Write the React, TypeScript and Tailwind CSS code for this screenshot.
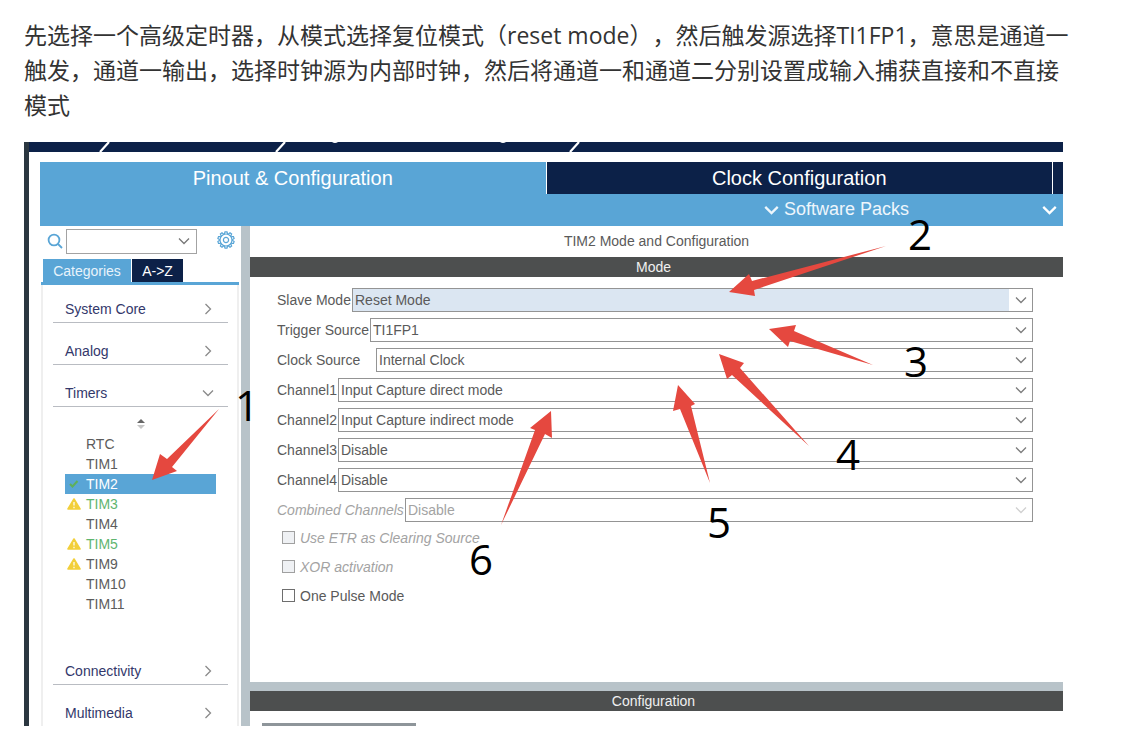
import type { ReactNode } from "react";

type Field = {
  id: string;
  label: string;
  value: string;
  labelWidth: string;
  active?: boolean;
  disabled?: boolean;
};

const fields: Field[] = [
  { id: "slave", label: "Slave Mode", value: "Reset Mode", labelWidth: "w-[75px]", active: true },
  { id: "trigger", label: "Trigger Source", value: "TI1FP1", labelWidth: "w-[93px]" },
  { id: "clock", label: "Clock Source", value: "Internal Clock", labelWidth: "w-[99px]" },
  { id: "ch1", label: "Channel1", value: "Input Capture direct mode", labelWidth: "w-[61px]" },
  { id: "ch2", label: "Channel2", value: "Input Capture indirect mode", labelWidth: "w-[61px]" },
  { id: "ch3", label: "Channel3", value: "Disable", labelWidth: "w-[61px]" },
  { id: "ch4", label: "Channel4", value: "Disable", labelWidth: "w-[61px]" },
  { id: "combined", label: "Combined Channels", value: "Disable", labelWidth: "w-[128px]", disabled: true },
];

const checks = [
  { id: "etr", label: "Use ETR as Clearing Source", disabled: true },
  { id: "xor", label: "XOR activation", disabled: true },
  { id: "pulse", label: "One Pulse Mode", disabled: false },
];

type Timer = { name: string; icon?: "check" | "warn"; tone: string };

const timers: Timer[] = [
  { name: "RTC", tone: "text-[#5c5c5c]" },
  { name: "TIM1", tone: "text-[#5c5c5c]" },
  { name: "TIM2", icon: "check", tone: "bg-[#59a5d6] text-white" },
  { name: "TIM3", icon: "warn", tone: "text-[#5fb56f]" },
  { name: "TIM4", tone: "text-[#5c5c5c]" },
  { name: "TIM5", icon: "warn", tone: "text-[#5fb56f]" },
  { name: "TIM9", icon: "warn", tone: "text-[#5c5c5c]" },
  { name: "TIM10", tone: "text-[#5c5c5c]" },
  { name: "TIM11", tone: "text-[#5c5c5c]" },
];

const arrows = [
  "152,480 160,454 167,459 219,409 172,467 177,471",
  "729,292 749,274 752,281 886,246 754,290 755,296",
  "769,329 796,325 794,331 873,365 790,341 788,347",
  "719,354 744,363 740,368 809,446 732,375 727,379",
  "678,385 695,404 691,406 710,483 680,409 673,411",
  "551,411 552,438 545,434 501,525 535,430 530,428",
];

const marks = [
  { n: "1", x: 235, y: 421 },
  { n: "2", x: 908, y: 250 },
  { n: "3", x: 904, y: 377 },
  { n: "4", x: 836, y: 470 },
  { n: "5", x: 707, y: 538 },
  { n: "6", x: 469, y: 575 },
];

function Chevron({ className, width = 1.3 }: { className: string; width?: number }) {
  return (
    <svg viewBox="0 0 12 8" className={className} fill="none" stroke="currentColor" strokeWidth={width} aria-hidden="true">
      <path d="M1 1.5 L6 6.5 L11 1.5" />
    </svg>
  );
}

function ChevronRight() {
  return (
    <svg viewBox="0 0 8 12" className="h-3 w-2 text-[#8a8a8a]" fill="none" stroke="currentColor" strokeWidth={1.3} aria-hidden="true">
      <path d="M1.5 1 L6.5 6 L1.5 11" />
    </svg>
  );
}

function SearchIcon() {
  return (
    <svg viewBox="0 0 16 16" className="h-4 w-4 shrink-0 text-[#59a5d6]" fill="none" stroke="currentColor" strokeWidth={1.8} aria-hidden="true">
      <circle cx="7" cy="7" r="5.4" />
      <path d="M11 11 L15 15" />
    </svg>
  );
}

function GearIcon() {
  const teeth = [0, 36, 72, 108, 144, 180, 216, 252, 288, 324];
  return (
    <svg viewBox="-9 -9 18 18" className="h-[18px] w-[18px] text-[#59a5d6]" fill="none" stroke="currentColor" strokeWidth={1.2} aria-hidden="true">
      <circle r="6" />
      <circle r="2.6" />
      {teeth.map((a) => (
        <path key={a} d="M-1.6 -6 L-1 -8.2 H1 L1.6 -6" transform={`rotate(${a})`} />
      ))}
    </svg>
  );
}

function WarnIcon() {
  return (
    <svg viewBox="0 0 14 12" className="h-3 w-[14px]" aria-hidden="true">
      <path d="M7 1 L13 11 H1 Z" fill="#f2cf3a" stroke="#f2cf3a" strokeWidth={1.6} strokeLinejoin="round" />
      <path d="M7 4 V7.6 M7 8.8 V10.2" stroke="#fff" strokeWidth={1.2} />
    </svg>
  );
}

function CheckIcon() {
  return (
    <svg viewBox="0 0 14 12" className="h-3 w-[14px]" fill="none" stroke="#5fb05a" strokeWidth={2} aria-hidden="true">
      <path d="M3 6 L5.5 8.5 L10.5 3" />
    </svg>
  );
}

function Category({ label, open, last }: { label: string; open?: boolean; last?: boolean }) {
  return (
    <button
      type="button"
      className={
        last
          ? "flex h-[27px] w-full items-center justify-between pr-4 pl-3 text-[#33386b]"
          : "flex h-7 w-full items-center justify-between border-b border-[#b9bcc2] pr-4 pl-3 text-[#33386b]"
      }
    >
      <span>{label}</span>
      {open ? <Chevron className="-mr-0.5 h-2 w-3 text-[#8a8a8a]" /> : <ChevronRight />}
    </button>
  );
}

function BarTitle({ children }: { children: ReactNode }) {
  return <h3 className="h-5 bg-[#4d4f4f] pr-1.5 text-center text-sm leading-5 text-[#f0f0f0]">{children}</h3>;
}

function TopStrip() {
  return (
    <svg viewBox="0 0 1034 10" preserveAspectRatio="xMinYMin slice" className="block h-[10px] w-full bg-[#0c2148]" aria-hidden="true">
      <g stroke="#fff" strokeWidth={2.2}>
        <path d="M71 10 L80 0 M247 10 L256 0 M541 10 L550 0" />
      </g>
      <path d="M303 0 H309 Q306 2 303 0 Z M471 0 H477 Q474 2 471 0 Z" fill="#fff" />
    </svg>
  );
}

function Sidebar() {
  return (
    <aside className="w-[201px] shrink-0">
      <div className="flex h-[33px] items-start pt-[3px] pl-[7px]">
        <label htmlFor="find" className="pt-1" aria-label="Search">
          <SearchIcon />
        </label>
        <div className="relative ml-[3px]">
          <input id="find" type="text" className="h-[25px] w-[131px] border border-[#a3a3a3] bg-white px-1 outline-none" />
          <Chevron className="pointer-events-none absolute top-2 right-[7px] h-2 w-3 text-[#777]" />
        </div>
        <button type="button" className="ml-5 pt-0.5" aria-label="Settings">
          <GearIcon />
        </button>
      </div>
      <div className="mr-[2px] ml-px flex border-b-[3px] border-[#59a5d6] pl-[2px]">
        <button type="button" className="h-[23px] w-[88px] bg-[#59a5d6] text-[#e8f3fb]">Categories</button>
        <button type="button" className="ml-px h-[23px] w-[51px] bg-[#0c2148] text-white">A-&gt;Z</button>
      </div>
      <div className="mr-[2px] ml-px border-x-2 border-[#efefef] pt-[10px] pr-[9px] pl-[10px]">
        <div className="flex flex-col gap-[14px]">
          <Category label="System Core" />
          <Category label="Analog" />
          <Category label="Timers" open />
        </div>
        <div className="flex h-[27px] items-end justify-center pb-1">
          <svg viewBox="0 0 8 12" className="h-3 w-2" aria-hidden="true">
            <path d="M0 5 L4 1 L8 5 Z" fill="#666" />
            <path d="M0 7 L4 11 L8 7 Z" fill="#c6c6c6" />
          </svg>
        </div>
        <ul className="mb-[43px] ml-3 mr-3">
          {timers.map((t) => (
            <li key={t.name} className={t.tone}>
              <button type="button" className="flex h-5 w-full items-center text-left">
                <span className="flex w-[21px] pl-[2px]">
                  {t.icon === "warn" && <WarnIcon />}
                  {t.icon === "check" && <CheckIcon />}
                </span>
                {t.name}
              </button>
            </li>
          ))}
        </ul>
        <div className="flex flex-col gap-[14px]">
          <Category label="Connectivity" />
          <Category label="Multimedia" last />
        </div>
      </div>
    </aside>
  );
}

function FieldRow({ field }: { field: Field }) {
  return (
    <div className={field.disabled ? "flex h-6 items-center text-[#a3a3a3]" : "flex h-6 items-center text-[#5a5a5a]"}>
      <label htmlFor={field.id} className={`${field.labelWidth} shrink-0 whitespace-nowrap ${field.disabled ? "italic" : ""}`}>
        {field.label}
      </label>
      <div className="relative h-6 flex-1 border border-[#949494] bg-white">
        <select
          id={field.id}
          disabled={field.disabled}
          className={`block h-full w-full appearance-none pl-[2px] opacity-100 outline-none ${field.active ? "bg-[#dbe6f2]" : "bg-white"}`}
        >
          <option>{field.value}</option>
        </select>
        <span className="pointer-events-none absolute inset-y-0 right-0 flex w-[23px] items-center justify-center bg-white">
          <Chevron className={field.disabled ? "h-2 w-3 text-[#d0d0d0]" : "h-2 w-3 text-[#7d7d7d]"} />
        </span>
      </div>
    </div>
  );
}

function ModePanel() {
  return (
    <section className="flex min-w-0 flex-1 flex-col">
      <h2 className="h-[31px] text-center text-sm leading-[31px] text-[#5a5a5a]">TIM2 Mode and Configuration</h2>
      <BarTitle>Mode</BarTitle>
      <form className="flex-1 pt-[11px] pr-[30px] pl-[27px]">
        <div className="flex flex-col gap-[6px]">
          {fields.map((f) => (
            <FieldRow key={f.id} field={f} />
          ))}
        </div>
        <div className="mt-px flex flex-col pl-[5px]">
          {checks.map((c) => (
            <label
              key={c.id}
              htmlFor={c.id}
              className={c.disabled ? "flex h-[29px] items-center gap-[5px] text-[#a3a3a3] italic" : "flex h-[29px] items-center gap-[5px] text-[#5a5a5a]"}
            >
              <input
                id={c.id}
                type="checkbox"
                disabled={c.disabled}
                className={
                  c.disabled
                    ? "h-[13px] w-[13px] appearance-none border border-[#a0a0a0] bg-[#eff1f4]"
                    : "h-[13px] w-[13px] appearance-none border border-[#6e6e6e] bg-white checked:bg-[#59a5d6]"
                }
              />
              {c.label}
            </label>
          ))}
        </div>
      </form>
      <div className="h-[9px] bg-[#b8c3c9]" />
      <BarTitle>Configuration</BarTitle>
      <div className="pt-3 pl-3">
        <div className="h-[3px] w-[154px] bg-[#8e959a]" />
      </div>
    </section>
  );
}

function Annotations() {
  return (
    <svg
      viewBox="29 142 1034 584"
      preserveAspectRatio="xMinYMin meet"
      className="pointer-events-none absolute inset-0 h-full w-full"
    >
      <g fill="#e5483f">
        {arrows.map((points) => (
          <polygon key={points} points={points} />
        ))}
      </g>
      <g className="fill-black font-['Open_Sans','Noto_Sans',sans-serif] text-[42px]">
        {marks.map((m) => (
          <text key={m.n} x={m.x} y={m.y}>
            {m.n}
          </text>
        ))}
      </g>
    </svg>
  );
}

export default function App() {
  return (
    <main className="min-h-screen bg-white pt-[18px] pr-[60px] pb-[15px] pl-6">
      <p className="font-['Open_Sans','Noto_Sans_CJK_SC',sans-serif] text-[23px] leading-[35px] whitespace-nowrap text-[#333] [text-spacing-trim:space-all]">
        先选择一个高级定时器，从模式选择复位模式（reset mode），然后触发源选择TI1FP1，意思是通道一
        <br />
        触发，通道一输出，选择时钟源为内部时钟，然后将通道一和通道二分别设置成输入捕获直接和不直接
        <br />
        模式
      </p>
      <figure className="relative mt-[19px] overflow-hidden border-l-[5px] border-[#2b3740] font-['Liberation_Sans',Arial,sans-serif] text-sm">
        <TopStrip />
        <div className="pt-[10px] pl-[11px]">
          <header className="bg-[#59a5d6] text-white">
            <nav className="flex h-8 text-[20px]">
              <button type="button" className="min-w-0 flex-1">Pinout &amp; Configuration</button>
              <button type="button" className="min-w-0 flex-1 border-x border-white bg-[#0c2148]">Clock Configuration</button>
              <span className="w-[10px] bg-[#0c2148]" />
            </nav>
            <div className="flex h-8 items-center justify-end pr-[6px] text-[18px]">
              <button type="button" className="flex items-center gap-[5px] text-[#eef6fc]">
                <Chevron className="h-[10px] w-[15px]" width={1.8} />
                Software Packs
              </button>
              <button type="button" className="ml-[133px]" aria-label="More">
                <Chevron className="h-[10px] w-[15px]" width={1.8} />
              </button>
            </div>
          </header>
          <div className="flex">
            <Sidebar />
            <div className="w-[9px] shrink-0 bg-[#b8c3c9]" />
            <ModePanel />
          </div>
        </div>
        <Annotations />
      </figure>
    </main>
  );
}
